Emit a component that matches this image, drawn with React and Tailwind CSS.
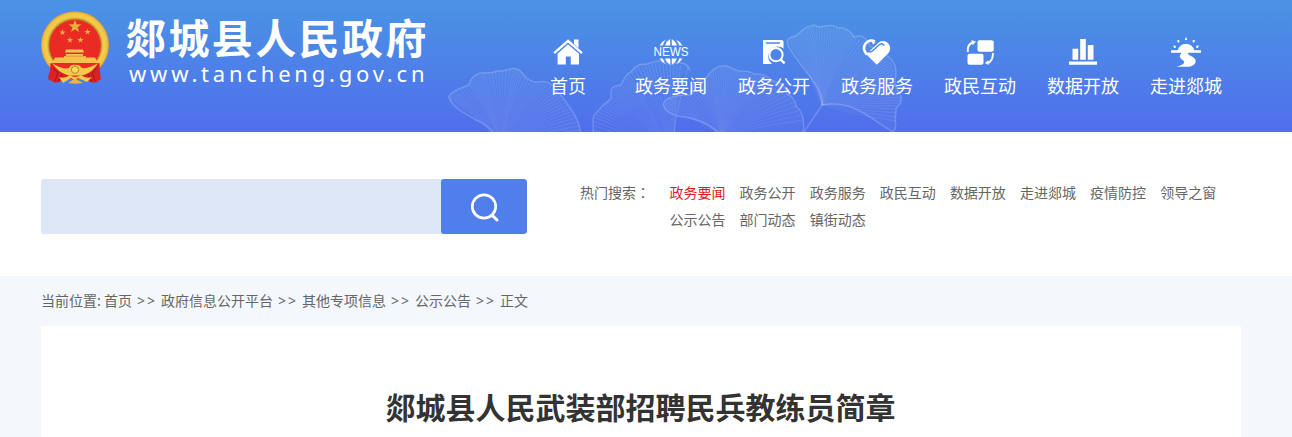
import React from "react";

const NAV = [
  ["首页", HomeIcon],
  ["政务要闻", NewsIcon],
  ["政务公开", DocIcon],
  ["政务服务", HeartIcon],
  ["政民互动", ExchangeIcon],
  ["数据开放", ChartIcon],
  ["走进郯城", SunIcon],
];

const HOT = ["政务要闻", "政务公开", "政务服务", "政民互动", "数据开放", "走进郯城", "疫情防控", "领导之窗", "公示公告", "部门动态", "镇街动态"];

const CRUMBS = ["首页", "政府信息公开平台", "其他专项信息", "公示公告", "正文"];

function Icon({ children }) {
  return (
    <svg className="block h-9 w-10" viewBox="0 0 40 36" fill="#fff">
      {children}
    </svg>
  );
}

function HomeIcon() {
  return (
    <Icon>
      <path d="M20 10.2 31 19.8V30.5H22.8V22.5H17.8V30.5H9.6V19.8Z" />
      <path d="M6.2 19.2 20 6.8 34 19.2" fill="none" stroke="#fff" strokeWidth="2.4" />
      <path d="M26 5.5H30.5V14L26 10Z" />
    </Icon>
  );
}

function NewsIcon() {
  return (
    <Icon>
      <path d="M19.2 5V11.5H14Q15.5 7 19.2 5ZM20.8 5V11.5H26Q24.5 7 20.8 5ZM15 5.8Q12.6 8.2 11.8 11.5H8.6Q10.6 7.5 15 5.8ZM25 5.8Q27.4 8.2 28.2 11.5H31.4Q29.4 7.5 25 5.8Z" />
      <path d="M19.2 31V24.5H14Q15.5 29 19.2 31ZM20.8 31V24.5H26Q24.5 29 20.8 31ZM15 30.2Q12.6 27.8 11.8 24.5H8.6Q10.6 28.5 15 30.2ZM25 30.2Q27.4 27.8 28.2 24.5H31.4Q29.4 28.5 25 30.2Z" />
      <text x="20" y="22.3" textAnchor="middle" textLength="35" lengthAdjust="spacingAndGlyphs" fontSize="12" className="font-['Liberation_Sans',sans-serif]">NEWS</text>
    </Icon>
  );
}

function DocIcon() {
  return (
    <Icon>
      <path fillRule="evenodd" d="M9 6H27.5Q29.5 6 29.5 8V14.5A9 9 0 1 0 18 30H9ZM12 8.3V9.7H26V8.3Z" />
      <circle cx="22" cy="20.7" r="6.6" fill="none" stroke="#fff" strokeWidth="2" />
      <path d="M26.8 25.6 30.6 29.4" stroke="#fff" strokeWidth="2.4" />
    </Icon>
  );
}

function HeartIcon() {
  return (
    <Icon>
      <path d="M9.5 20.5 19.8 30.8 31.3 19.2C37 12.5 29 3.5 22 8.2L12.8 17Q11 18.4 9.5 20.5Z" />
      <path d="M10 20.5C2.5 12.5 11 3.5 17.8 7.5" fill="none" stroke="#fff" strokeWidth="2.6" />
      <path d="M10.3 16.8Q13 19.2 16 16.5L22.5 10.5Q25 8.8 27 11" fill="none" stroke="#4b86e7" strokeWidth="1.5" strokeLinecap="round" />
      <path d="M17.8 7.5 15.5 9.6" stroke="#fff" strokeWidth="2.2" />
    </Icon>
  );
}

function ExchangeIcon() {
  return (
    <Icon>
      <rect x="17.5" y="6.2" width="16.2" height="11.5" rx="2" />
      <rect x="7.5" y="19.8" width="16" height="11" rx="2" />
      <path d="M7.8 18Q7 10.5 12.5 8.5M33 19Q33 27.5 27.5 29" fill="none" stroke="#fff" strokeWidth="1.9" />
      <path d="M11.5 6 16 7.8 12.5 11.2ZM28.8 31 24.8 29 28.2 26.2Z" />
    </Icon>
  );
}

function ChartIcon() {
  return (
    <Icon>
      <path d="M6 27.5H34V30.8H6ZM9.5 14.7H15.2V25.8H9.5ZM17.2 5H22.8V25.8H17.2ZM24.8 11H30.5V25.8H24.8Z" />
    </Icon>
  );
}

function SunIcon() {
  return (
    <Icon>
      <path d="M5 16.3H11.8A8.4 8.4 0 0 1 28.2 16.3H35V18.8H22.5Q20.5 20.3 25.5 22.2C33 26 29.5 32.5 22 32.8H10.5C18 30.5 20.5 28.5 15.8 25.5Q12 23 15.5 18.8H5Z" />
      <path d="M18.9 5.3 20 3 21.1 5.3V6H18.9ZM11.3 6.1 13.5 6.2 13.1 8.6H11.8ZM26.6 6.3 29 6.1 28.3 8.5 26.9 8.6ZM7.3 11.3 9.8 12.1 9.6 14H8ZM30.2 12.1 32.8 11.3 32 14H30.5Z" />
    </Icon>
  );
}

const star = (cx, cy, r) =>
  Array.from({ length: 10 }, (_, i) => {
    const a = -Math.PI / 2 + (i * Math.PI) / 5;
    const q = i % 2 ? r * 0.4 : r;
    return `${cx + q * Math.cos(a)},${cy + q * Math.sin(a)}`;
  }).join(" ");

function Emblem() {
  return (
    <svg className="block h-[74px] w-[70px]" viewBox="0 0 70 74">
      <defs>
        <radialGradient id="ring">
          <stop offset=".75" stopColor="#c58f28" />
          <stop offset=".84" stopColor="#f5cd4b" />
          <stop offset=".94" stopColor="#f0c445" />
          <stop offset="1" stopColor="#d59c35" />
        </radialGradient>
      </defs>
      <ellipse cx="35" cy="34" rx="34" ry="33.7" fill="url(#ring)" />
      <circle cx="35" cy="34.5" r="26" fill="#e92b24" stroke="#b47c25" strokeWidth=".8" />
      <g fill="#e9ae3c">
        <polygon points={star(35, 15.5, 6.8)} />
        <polygon points={star(22.5, 21.5, 3.3)} />
        <polygon points={star(47.5, 21, 3.3)} />
        <polygon points={star(30, 29, 3.3)} />
        <polygon points={star(40.5, 29, 3.3)} />
      </g>
      <path d="M26 38.5H43L44 41.5H25ZM26 43H43V45H26ZM24 45H46V51H24ZM15 46.5H55L58 52H12Z" fill="#f4c34d" />
      <path d="M25 45.2H44" stroke="#d2902d" strokeWidth=".8" />
      <path d="M11 52H59L56 62Q35 75 14 62Z" fill="#e92b24" />
      <path d="M10.5 52 17 56 29 66 19 71Q14 73 12 70L9 69Q7 67 10 60ZM59.5 52 53 56 41 66 51 71Q56 73 58 70L61 68Q60 64 60 60Z" fill="#dc2023" />
      <path d="M13 57 18 62 15 70M57 57 52 62 55 70M22 63 18 71M48 63 52 71" fill="none" stroke="#9c1720" strokeWidth="1" />
      <path d="M12 52Q22 59 29 57Q31 53 35 54Q39 53 42 57Q49 58 58 52Q53 61 44 64Q35 65 27 64Q18 61 12 52Z" fill="#f4ca49" />
      <circle cx="35" cy="58.8" r="3.6" fill="#f8d95c" stroke="#b8822c" strokeWidth="1" />
      <path d="M19 66Q25 68 30 64Q35 68 41 64Q46 68 52 66L47 71 38 67 35 69 31 67 23 72Z" fill="#f4ca49" />
      <path d="M28 72 35 67.5 43 72Q35 73.5 28 72Z" fill="#e9b53f" />
    </svg>
  );
}

// Each leaf: the point its veins start from, the rim they reach, and its outline.
const LEAVES = [
  {
    apex: [501, 145],
    rim: [[449, 97], [455, 90], [469, 84], [475, 76], [485, 73], [499, 71], [514, 68], [523, 73], [535, 82], [548, 84], [560, 93], [568, 105], [576, 118], [581, 134]],
    edge: "M501 145Q493 127 476 120C466 114 451 107 449 97Q449 92 469 85C471 75 480 72 486 73Q492 73 498 71C506 72 511 67 517 69Q522 71 525 77C530 81 534 83 539 82C547 80 553 84 556 91C561 95 565 99 568 105Q579 119 581 134",
  },
  {
    apex: [672, 160],
    rim: [[593, 134], [594, 117], [602, 106], [611, 98], [613, 87], [624, 84], [628, 73], [641, 64], [655, 63], [670, 61], [684, 67]],
    edge: "M593 134C594 126 591 116 595 114C601 108 602 106 602 106C607 102 612 100 611 95C610 87 614 86 621 85C624 80 625 74 631 72C638 62 642 65 647 64C657 60 669 59 675 63Q688 61 690 71",
  },
  {
    apex: [722, 136],
    rim: [[664, 107], [669, 98], [690, 95], [697, 81], [707, 77], [715, 69], [727, 66], [738, 71], [750, 73], [762, 76], [774, 80], [786, 91], [797, 106], [803, 125]],
    edge: "M722 136Q706 119 678 116C666 113 661 106 665 101Q671 95 690 95C692 85 696 80 706 78C711 70 718 65 727 66Q731 68 736 70C742 73 748 69 754 74Q766 73 772 81C782 82 785 86 787 94Q794 96 796 106Q806 114 803 134",
  },
  {
    apex: [822, 105],
    rim: [[787, 39], [795, 34], [804, 29], [813, 25], [825, 27], [837, 28], [848, 31], [857, 37], [870, 46], [880, 54], [890, 60], [894, 71], [895, 85], [901, 97], [897, 109], [896, 125]],
    edge: "M804 132 822 105C823 87 807 76 790 49C785 42 786 38 796 36Q803 30 804 29C810 25 814 24 819 27C827 25 835 25 838 28C846 27 851 32 854 37C862 34 867 38 870 46C878 48 884 53 890 58C896 63 897 72 895 80C894 92 903 91 901 99C902 106 895 106 896 111L895 120Q897 129 893 132C872 120 853 99 822 105",
  },
];

function Leaves() {
  return (
    <svg className="absolute left-0 top-0 h-[132px] w-[1292px]" viewBox="0 0 1292 132" fill="none" stroke="#fff">
      {LEAVES.map(({ apex, rim, edge }, n) => (
        <g key={edge}>
          <path d={edge} fill="#fff" fillOpacity={n === 1 ? ".02" : ".035"} stroke="none" />
          <radialGradient id={`vein${n}`} gradientUnits="userSpaceOnUse" cx={apex[0]} cy={apex[1]} r="90">
            <stop offset="0" stopColor="#fff" stopOpacity=".02" />
            <stop offset=".35" stopColor="#fff" stopOpacity=".09" />
            <stop offset="1" stopColor="#fff" stopOpacity=".15" />
          </radialGradient>
          {rim.slice(1).flatMap((p, i) =>
            [0, 0.25, 0.5, 0.75].map((t) => {
              const x = rim[i][0] + (p[0] - rim[i][0]) * t;
              const y = rim[i][1] + (p[1] - rim[i][1]) * t;
              const mx = apex[0] + (x - apex[0]) * 0.38;
              const my = apex[1] + (y - apex[1]) * 0.55;
              return <path key={`${i}-${t}`} d={`M${apex}Q${mx} ${my} ${x} ${y}`} strokeWidth=".7" stroke={`url(#vein${n})`} />;
            })
          )}
          <path d={edge} strokeWidth="1.5" opacity=".19" />
        </g>
      ))}
      <path d="M671 160Q674 118 688 67M673 160Q675 120 675 116" opacity=".12" />
    </svg>
  );
}

export default function App() {
  return (
    <div className="h-[437px] w-[1292px] overflow-hidden bg-[#f4f7fb] font-['Noto_Sans_CJK_SC',sans-serif] text-[#666]">
      <header className="relative h-[132px] bg-linear-to-b from-[#4a93e4] to-[#506eec] text-white">
        <Leaves />
        <div className="relative flex pl-10">
          <div className="flex w-[476px] pt-[11px]">
            <Emblem />
            <div className="ml-[15px] mt-px whitespace-nowrap">
              <div className="text-[41px] font-bold leading-[49px] tracking-[2.4px]">郯城县人民政府</div>
              <div className="ml-1 font-['Noto_Sans',sans-serif] text-[22px] leading-6 tracking-[3.8px]">www.tancheng.gov.cn</div>
            </div>
          </div>
          <nav className="flex pt-[34px]">
            {NAV.map(([label, Glyph]) => (
              <a key={label} className="flex w-[103px] flex-col items-center">
                <Glyph />
                <span className="ml-px mt-0.5 text-[18px] leading-[26px]">{label}</span>
              </a>
            ))}
          </nav>
        </div>
      </header>

      <section className="flex h-36 bg-white pl-[41px] pt-[47px]">
        <div className="flex h-[55px] w-[486px] overflow-hidden rounded-[3px] bg-[#dee7f8]">
          <div className="flex-1" />
          <button className="flex w-[86px] items-center justify-center rounded-[3px] bg-[#507eeb]">
            <svg className="h-8 w-8" viewBox="0 0 32 32" fill="none" stroke="#fff" strokeWidth="2.7" strokeLinecap="round">
              <circle cx="16" cy="15.5" r="11.7" />
              <path d="M25 25.2 29 29" strokeWidth="3" />
            </svg>
          </button>
        </div>
        <div className="ml-[53px] flex text-[14px] leading-[27px]">
          <div className="w-[89.5px] whitespace-nowrap">热门搜索<span className="font-['Noto_Sans_CJK_TC',sans-serif]" lang="zh-TW">：</span></div>
          <div className="grid grid-cols-[repeat(8,70.1px)] content-start whitespace-nowrap">
            {HOT.map((t, i) => (
              <a key={t} className={i === 0 ? "text-[#e31b1f]" : ""}>{t}</a>
            ))}
          </div>
        </div>
      </section>

      <div className="flex h-[50px] whitespace-nowrap pl-[41px] text-[14px] leading-[48px]">
        <span className="w-[63px]">当前位置:</span>
        {CRUMBS.map((c, i) => (
          <React.Fragment key={c}>
            {i > 0 && <span className="w-[29px] pl-[5px] pt-px font-['Noto_Sans',sans-serif] tracking-[2px]">&gt;&gt;</span>}
            <span>{c}</span>
          </React.Fragment>
        ))}
      </div>

      <main className="ml-[41px] h-[111px] w-[1200px] bg-white pr-px pt-[58px] text-center">
        <h1 className="text-[30px] font-bold leading-[45px] text-[#333]">郯城县人民武装部招聘民兵教练员简章</h1>
      </main>
    </div>
  );
}
